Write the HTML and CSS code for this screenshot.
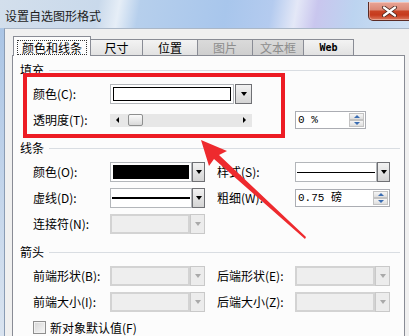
FILE: index.html
```html
<!DOCTYPE html>
<html lang="zh-CN">
<head>
  <meta charset="UTF-8" />
  <link rel="stylesheet" href="styles.css">
  <title>设置自选图形格式</title>
</head>
<body>
<div class="window">
  <div class="titlebar">
    <span class="title">设置自选图形格式</span>
    <div class="close-btn">
      <svg width="17" height="11" viewBox="0 0 17 11">
        <path d="M3 1.5 L14 9.5 M14 1.5 L3 9.5" stroke="#4b2a22" stroke-width="4" stroke-linecap="round" />
        <path d="M3 1.5 L14 9.5 M14 1.5 L3 9.5" stroke="#fff" stroke-width="2.2" stroke-linecap="round" />
      </svg>
    </div>
  </div>

  <div class="client">
    <div class="tabs">
      <div class="tab tab-active"><span class="focus">颜色和线条</span></div>
      <div class="tab tab-size">尺寸</div>
      <div class="tab tab-pos">位置</div>
      <div class="tab tab-pic disabled">图片</div>
      <div class="tab tab-text disabled">文本框</div>
      <div class="tab tab-web">Web</div>
    </div>

    <div class="panel">
      <!-- 填充 -->
      <div class="section">
        <div class="group-title">填充</div>
        <div class="row">
          <span class="lbl">颜色(C):</span>
          <div class="combo combo-fill">
            <div class="field"><div class="swatch"></div></div>
            <div class="drop"><i class="tri"></i></div>
          </div>
        </div>
        <div class="row row-alpha">
          <span class="lbl">透明度(T):</span>
          <div class="slider">
            <i class="arrow-l"></i>
            <div class="thumb"></div>
            <i class="arrow-r"></i>
          </div>
          <div class="spin spin-alpha">
            <span class="spin-val">0 %</span>
            <div class="spin-btns"><span><i class="up"></i></span><span><i class="down"></i></span></div>
          </div>
        </div>
      </div>

      <!-- 线条 -->
      <div class="section">
        <div class="group-title">线条</div>
        <div class="row">
          <span class="lbl">颜色(O):</span>
          <div class="combo">
            <div class="field"><div class="swatch swatch-black"></div></div>
            <div class="drop"><i class="tri"></i></div>
          </div>
          <span class="lbl lbl-r">样式(S):</span>
          <div class="combo">
            <div class="field field-line"><div class="line"></div></div>
            <div class="drop"><i class="tri"></i></div>
          </div>
        </div>
        <div class="row">
          <span class="lbl">虚线(D):</span>
          <div class="combo">
            <div class="field field-line"><div class="line line-thick"></div></div>
            <div class="drop"><i class="tri"></i></div>
          </div>
          <span class="lbl lbl-r">粗细(W):</span>
          <div class="spin spin-weight">
            <span class="spin-val">0.75 磅</span>
            <div class="spin-btns"><span><i class="up"></i></span><span><i class="down"></i></span></div>
          </div>
        </div>
        <div class="row">
          <span class="lbl">连接符(N):</span>
          <div class="combo combo-off">
            <div class="field"></div>
            <div class="drop"><i class="tri"></i></div>
          </div>
        </div>
      </div>

      <!-- 箭头 -->
      <div class="section">
        <div class="group-title">箭头</div>
        <div class="row">
          <span class="lbl">前端形状(B):</span>
          <div class="combo combo-off">
            <div class="field"></div>
            <div class="drop"><i class="tri"></i></div>
          </div>
          <span class="lbl lbl-r">后端形状(E):</span>
          <div class="combo combo-off">
            <div class="field"></div>
            <div class="drop"><i class="tri"></i></div>
          </div>
        </div>
        <div class="row">
          <span class="lbl">前端大小(I):</span>
          <div class="combo combo-off">
            <div class="field"></div>
            <div class="drop"><i class="tri"></i></div>
          </div>
          <span class="lbl lbl-r">后端大小(Z):</span>
          <div class="combo combo-off">
            <div class="field"></div>
            <div class="drop"><i class="tri"></i></div>
          </div>
        </div>
        <label class="row check-row"><span class="checkbox"></span>新对象默认值(F)</label>
      </div>
    </div>
  </div>

  <!-- annotation drawn over the dialog -->
  <div class="callout-box"></div>
  <svg class="callout-arrow" width="409" height="336" viewBox="0 0 409 336">
    <polygon points="201,140 227,151 219,155 306,237 305,239 214,159 209,166" fill="#ee2a2e" />
  </svg>
</div>
</body>
</html>
```

FILE: styles.css
```css
* {
  box-sizing: border-box;
}

body {
  margin: 0;
  font-family: "Noto Sans CJK SC", "Noto Sans", sans-serif;
  font-size: 12px;
  color: #000;
  background: #f0f0f0;
}

/* Window frame */
.window {
  position: relative;
  width: 409px;
  height: 336px;
  overflow: hidden;
  background: linear-gradient(180deg, #a6c2e4 0px, #b7cde8 110px, #dae4f0 336px);
}

.titlebar {
  height: 28px;
  display: flex;
  justify-content: space-between;
  align-items: flex-start;
  padding-left: 5px;
  background: linear-gradient(100deg, #d3dfec 0%, #c9d9eb 24%, #e6eef7 29%, #b6cfec 34%, #a8c6ec 55%, #b4cbef 66%, #e4e8f7 72%, #c9c6ee 77%, #bcd4f0 86%, #d0e0f3 100%);
}

.title {
  margin-top: 9px;
  line-height: 14px;
  color: #1c1c1c;
}

.close-btn {
  width: 47px;
  height: 19px;
  margin-top: 2px;
  margin-right: -6px;
  padding-right: 4px;
  border: 1px solid #5b2b24;
  border-top: none;
  border-radius: 0 0 5px 5px;
  background: linear-gradient(#e9a597 0%, #dc8a77 42%, #c94425 52%, #c63a1d 72%, #dc7a5e 100%);
  box-shadow: inset 0 0 0 1px rgba(255, 255, 255, 0.35);
  display: flex;
  align-items: center;
  justify-content: center;
}

/* Client area */
.client {
  height: 308px;
  margin-left: 4px;
  border-left: 1px solid #8a9cb4;
  border-top: 1px solid #aab7c7;
  background: #f0f0f0;
  padding: 7px 0 0 7px;
}

/* Tabs */
.tabs {
  display: flex;
  height: 20px;
  margin-bottom: -1px;
  padding-left: 1px;
  position: relative;
  z-index: 1;
}

.tab {
  height: 16px;
  margin-top: 3px;
  margin-left: -1px;
  border: 1px solid #898c95;
  border-bottom: none;
  background: linear-gradient(#f3f3f3, #e2e2e2);
  text-align: center;
  line-height: 15px;
  color: #000;
}

.tab-active {
  width: 78px;
  height: 20px;
  margin-top: 0;
  margin-left: 0;
  background: #fcfcfc;
  position: relative;
  z-index: 1;
}

.focus {
  display: block;
  height: 15px;
  margin: 3px 3px 0;
  border: 1px dotted #333;
  line-height: 13px;
}

.tab-size { width: 53px; }
.tab-pos { width: 56px; }
.tab-pic { width: 56px; }
.tab-text { width: 52px; }

.tab-web {
  width: 51px;
  font-family: "DejaVu Sans Mono", monospace;
  font-weight: bold;
  font-size: 10px;
}

.tab.disabled {
  background: linear-gradient(#dadada, #cfcfcf);
  color: #8d8d8d;
}

/* Tab page */
.panel {
  width: 393px;
  height: 290px;
  border: 1px solid #898c95;
  background: #fcfcfc;
  padding-top: 7px;
}

.section {
  display: flex;
  flex-direction: column;
  gap: 6px;
}

.section + .section {
  margin-top: 11px;
}

.group-title {
  display: flex;
  align-items: center;
  height: 14px;
  line-height: 14px;
  padding-left: 7px;
  margin-bottom: 1px;
}

.group-title::after {
  content: "";
  flex: 1;
  height: 1px;
  margin: 1px 4px 0 5px;
  background: #d9dde2;
}

.row {
  display: flex;
  align-items: center;
  height: 20px;
  padding-left: 20px;
}

.lbl {
  width: 77px;
  line-height: 14px;
  white-space: nowrap;
}

.lbl-r {
  width: 78px;
  margin-left: 12px;
}

/* Drop-down boxes */
.combo {
  display: flex;
  width: 95px;
  height: 20px;
}

.combo-fill {
  width: 142px;
}

.field {
  flex: 1;
  display: flex;
  align-items: center;
  padding: 2px;
  border: 1px solid #b3b6ba;
  background: #fff;
}

.swatch {
  flex: 1;
  height: 100%;
  border: 1px solid #000;
  background: #fff;
}

.swatch-black {
  background: #000;
}

.field-line {
  padding: 0 1px;
}

.line {
  flex: 1;
  height: 1px;
  background: #000;
}

.line-thick {
  height: 2px;
}

.drop {
  width: 13px;
  display: flex;
  align-items: center;
  justify-content: center;
  border: 1px solid #6f7074;
  background: linear-gradient(#f2f2f2, #d4d4d4);
}

.combo-fill .drop {
  width: 17px;
  margin-left: 1px;
}

.tri {
  width: 0;
  height: 0;
  border-left: 3.5px solid transparent;
  border-right: 3.5px solid transparent;
  border-top: 4px solid #000;
}

.combo-off .field {
  background: #eeeeee;
  border: 2px solid #d3d3d3;
}

.combo-off .drop {
  width: 15px;
  border: 1px solid #c9c9c9;
  background: #ececec;
}

.combo-off .tri {
  border-top-color: #a9a9a9;
}

/* Transparency slider */
.slider {
  display: flex;
  align-items: center;
  width: 142px;
  height: 13px;
  padding: 0 6px;
  background: #e7e7e7;
}

.arrow-l {
  border-top: 3px solid transparent;
  border-bottom: 3px solid transparent;
  border-right: 3px solid #000;
}

.arrow-r {
  margin-left: auto;
  border-top: 3px solid transparent;
  border-bottom: 3px solid transparent;
  border-left: 3px solid #000;
}

.thumb {
  width: 15px;
  height: 12px;
  margin-left: 9px;
  border: 1px solid #8e8f8f;
  border-radius: 2px;
  background: linear-gradient(#fbfbfb, #d9d9d9);
}

/* Spin boxes */
.spin {
  display: flex;
  height: 18px;
  border: 1px solid #abadb3;
  background: #fff;
}

.spin-alpha {
  width: 71px;
  margin-left: 43px;
}

.spin-weight {
  width: 95px;
}

.spin-val {
  flex: 1;
  padding-left: 2px;
  line-height: 16px;
  font-family: "Liberation Mono", "Noto Sans CJK SC", monospace;
  font-size: 11px;
}

.spin-btns {
  width: 16px;
  display: flex;
  flex-direction: column;
  padding: 1px 1px 1px 0;
}

.spin-btns span {
  flex: 1;
  display: flex;
  align-items: center;
  justify-content: center;
  border: 1px solid #c3c3c3;
  background: linear-gradient(#f6f6f6, #dedede);
}

.up,
.down {
  width: 0;
  height: 0;
  border-left: 3px solid transparent;
  border-right: 3px solid transparent;
}

.up {
  border-bottom: 3px solid #3b6db2;
}

.down {
  border-top: 3px solid #3b6db2;
}

/* Checkbox */
.check-row {
  height: 18px;
  gap: 4px;
}

.checkbox {
  width: 13px;
  height: 13px;
  border: 1px solid #8f8f8f;
  background: linear-gradient(135deg, #d6d6d6, #f7f7f7);
  box-shadow: inset 0 0 0 1px #f2f2f2;
}

/* Red annotation */
.callout-box {
  position: absolute;
  left: 23px;
  top: 73px;
  width: 262px;
  height: 65px;
  border: 4px solid #ed1c24;
}

.callout-arrow {
  position: absolute;
  left: 0;
  top: 0;
  pointer-events: none;
}
```
